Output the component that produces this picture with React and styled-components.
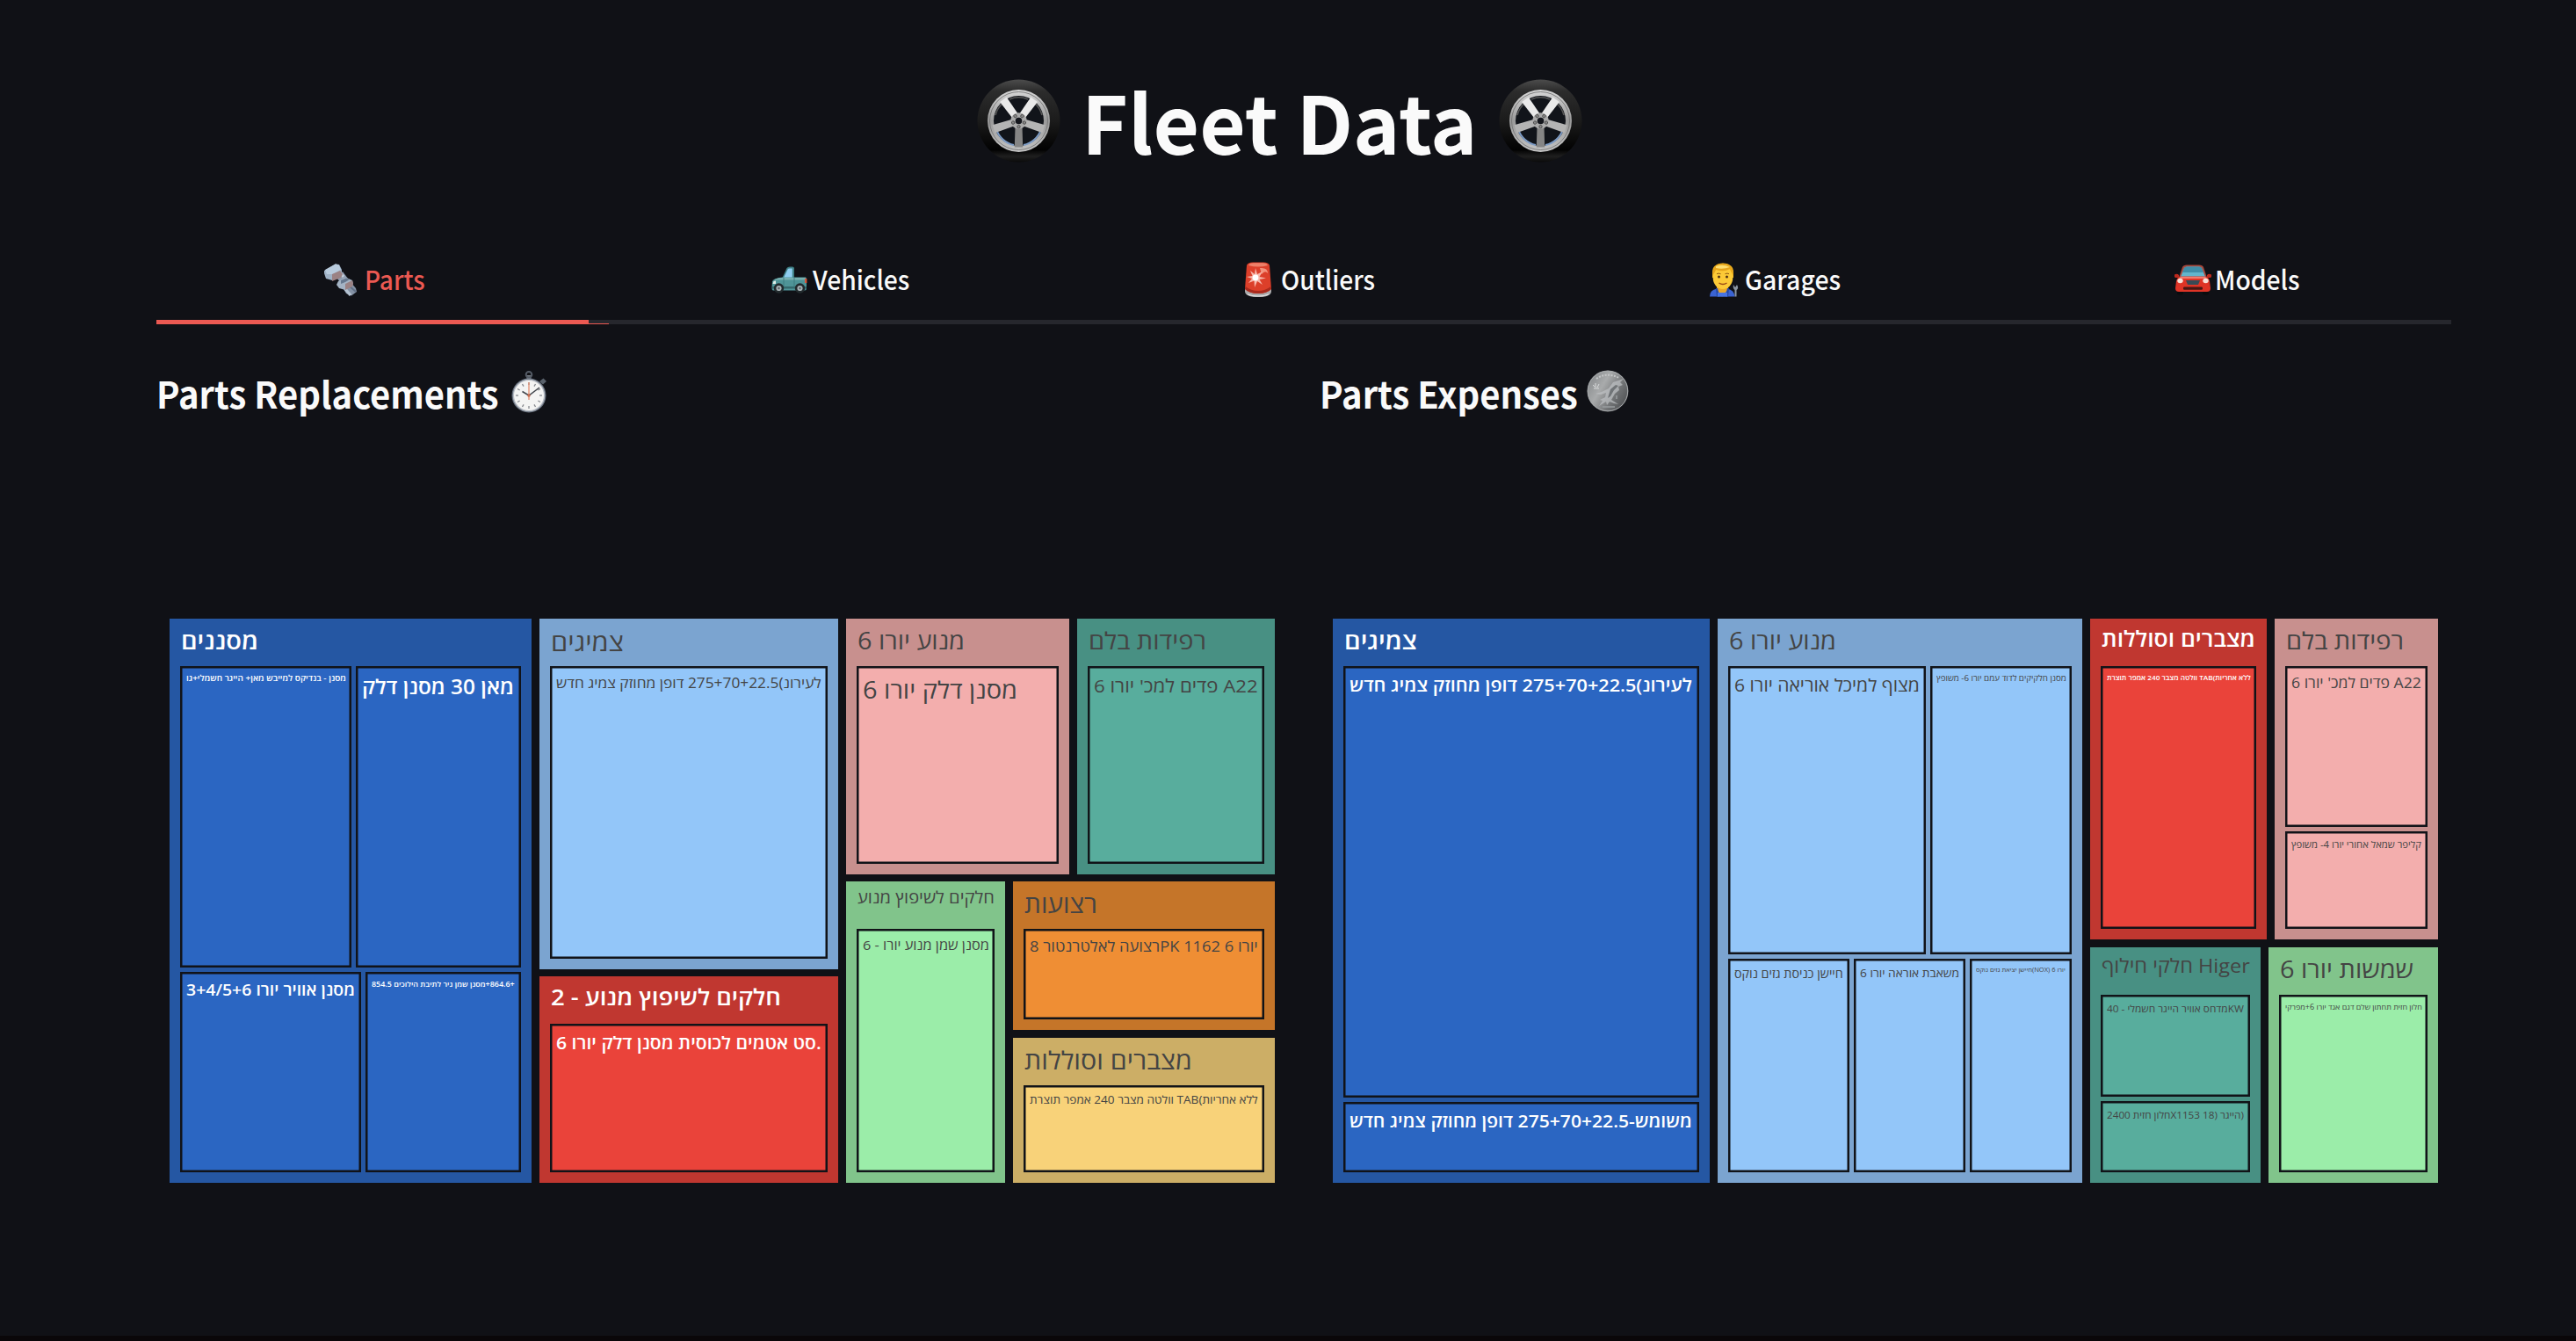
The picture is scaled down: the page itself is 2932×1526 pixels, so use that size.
import React, { useLayoutEffect, useRef, useState } from 'react';
import styled, { createGlobalStyle } from 'styled-components';

const GlobalStyle = createGlobalStyle`
  * { box-sizing: border-box; }
  html, body { margin: 0; padding: 0; background: #101116; }
`;

const SANS = `'Noto Sans CJK JP', 'Noto Sans', sans-serif`;
const CHART = `'Open Sans', 'Noto Sans', 'DejaVu Sans', sans-serif`;

const Page = styled.main`
  width: 2932px;
  height: 1526px;
  overflow: hidden;
  background: #101116;
  color: #fafafa;
  font-family: ${SANS};
  padding: 84px 142px 0 178px;
  border-bottom: 6px solid #0a0709;
`;

const TitleBar = styled.header`
  display: flex;
  align-items: center;
  height: 106px;
  padding-left: 933px;
`;

const Title = styled.h1`
  margin: -2px 28px 0 23px;
  width: 446px;
  font-size: 91px;
  line-height: 106px;
  font-weight: 700;
`;

const Tabs = styled.nav`
  display: flex;
  gap: 38px;
  height: 179px;
  padding-top: 93px;
  border-bottom: 5px solid #26272d;
`;

const Tab = styled.div`
  flex: 1;
  display: flex;
  justify-content: center;
  align-items: center;
  height: 70px;
  padding-left: ${(p) => p.$shift ?? 0}px;
  color: ${(p) => (p.$active ? '#eb5952' : '#fafafa')};
  font-size: 30px;
  line-height: 40px;
  font-weight: 500;
`;

const TextBox = styled.div`
  width: ${(p) => p.$w}px;
  margin-left: ${(p) => p.$gap ?? 0}px;
  margin-top: ${(p) => p.$mt ?? 0}px;
`;

const Marker = styled.div`
  width: 492px;
  height: 5px;
  margin-top: -5px;
  background: #eb5952;
`;

const MarkerTail = styled.div`
  width: 515px;
  height: 1px;
  margin-top: -1px;
  background: #eb5952;
`;

const Columns = styled.section`
  display: grid;
  grid-template-columns: 1324px 1288px;
`;

const Heading = styled.h3`
  display: flex;
  align-items: center;
  margin: 0;
  padding: 49px 0 0;
  height: 107px;
  font-size: 42px;
  line-height: 56px;
  font-weight: 700;
`;

const Treemap = styled.div`
  display: flex;
  gap: 9px;
  width: 1258px;
  height: 642px;
  margin: 228px 0 0 15px;
  font-family: ${CHART};
`;

const Stack = styled.div`
  display: flex;
  flex-direction: column;
  gap: ${(p) => p.$gap ?? 8.5}px;
  flex: ${(p) => p.$size} 0 0;
  min-width: 0;
  min-height: 0;
`;

const Line = styled.div`
  display: flex;
  gap: ${(p) => p.$gap ?? 9}px;
  flex: ${(p) => p.$size} 0 0;
  min-width: 0;
  min-height: 0;
`;

const GroupBox = styled.div`
  display: flex;
  flex: ${(p) => p.$size} 0 0;
  min-width: 0;
  min-height: 0;
  background: ${(p) => p.$color};
  color: ${(p) => (p.$light ? '#fff' : '#444')};
  font-weight: ${(p) => (p.$light ? 600 : 500)};
`;

const GroupBody = styled.div`
  display: flex;
  flex-direction: column;
  flex: 1;
  min-width: 0;
  padding: 0 12px 12px;
`;

const GroupLabel = styled.div`
  height: 54px;
  padding: 6px 0 0 1px;
`;

const TileBox = styled.div`
  flex: ${(p) => p.$size} 0 0;
  min-width: 0;
  min-height: 0;
  overflow: hidden;
  box-shadow: inset 0 0 0 2.5px #111318;
  background: ${(p) => p.$color};
`;

const TileLabel = styled.div`
  padding: 8px 0 0 7px;
`;

const FitSpan = styled.span`
  display: block;
  width: max-content;
  white-space: pre;
  line-height: ${(p) => p.$lh ?? 'inherit'};
  transform-origin: 0 50%;
`;

/* Text stretched horizontally to an exact width, at a fixed size. */
function Stretch({ width, children }) {
  const ref = useRef(null);
  const [scale, setScale] = useState(1);
  useLayoutEffect(() => {
    setScale(width / ref.current.offsetWidth);
  }, [width]);
  return (
    <FitSpan ref={ref} style={{ transform: `scaleX(${scale})` }}>
      {children}
    </FitSpan>
  );
}

const WIDEN = 1.07;

/* Chart label, slightly widened, whose font size adapts to fill a width. */
function FitText({ width, dir, children }) {
  const ref = useRef(null);
  const [size, setSize] = useState(100);
  useLayoutEffect(() => {
    setSize((100 * width) / ref.current.offsetWidth / WIDEN);
  }, [width]);
  return (
    <FitSpan ref={ref} $lh="1.38" dir={dir} style={{ fontSize: size, transform: `scaleX(${WIDEN})` }}>
      {children}
    </FitSpan>
  );
}

const PALETTE = {
  blue: ['#2557a3', '#2b66c2', true],
  sky: ['#7ba4d0', '#93c6f9', false],
  red: ['#c03730', '#ea433a', true],
  pink: ['#c8908e', '#f3aead', false],
  teal: ['#489083', '#58ad9d', false],
  green: ['#81c48b', '#9beda9', false],
  orange: ['#c57529', '#ef8e34', false],
  yellow: ['#ccae66', '#f8d279', false],
};

function Group({ size, hue, label, width, children }) {
  const [outer, , light] = PALETTE[hue];
  return (
    <GroupBox $size={size} $color={outer} $light={light}>
      <GroupBody>
        <GroupLabel>
          <FitText width={width}>{label}</FitText>
        </GroupLabel>
        {children}
      </GroupBody>
    </GroupBox>
  );
}

function Tile({ size = 1, hue, width, dir, children }) {
  return (
    <TileBox $size={size} $color={PALETTE[hue][1]}>
      <TileLabel>
        <FitText width={width + 1} dir={dir}>{children}</FitText>
      </TileLabel>
    </TileBox>
  );
}

const Icon = styled.svg`
  display: block;
  flex: none;
  overflow: visible;
  margin-left: ${(p) => p.$ml ?? 0}px;
  margin-top: ${(p) => p.$mt ?? 0}px;
`;

const SPOKES = [
  { angle: 0, fill: '#858585' },
  { angle: 72, fill: '#b4b4b4' },
  { angle: 144, fill: '#e9e9e9' },
  { angle: 216, fill: '#e9e9e9' },
  { angle: 288, fill: '#b4b4b4' },
];

function Tire({ id }) {
  return (
    <Icon width="97" height="97" viewBox="0 0 97 97">
      <defs>
        <linearGradient id={`${id}r`} x1="0" y1="0" x2="0" y2="1">
          <stop offset="0" stopColor="#4c4c4c" />
          <stop offset=".14" stopColor="#2c2c2c" />
          <stop offset=".5" stopColor="#1b1b1b" />
          <stop offset=".85" stopColor="#020202" />
          <stop offset=".93" stopColor="#1f1f1f" />
          <stop offset="1" stopColor="#0a0a0a" />
        </linearGradient>
        <linearGradient id={`${id}m`} x1="0" y1="0" x2="0" y2="1">
          <stop offset="0" stopColor="#d8d8d8" />
          <stop offset=".5" stopColor="#999" />
          <stop offset="1" stopColor="#c4c4c4" />
        </linearGradient>
      </defs>
      <circle cx="48.5" cy="48.5" r="47" fill={`url(#${id}r)`} />
      <circle cx="48.5" cy="48.5" r="35.5" fill={`url(#${id}m)`} />
      <circle cx="48.5" cy="48.5" r="33" fill="none" stroke="#6c6c6c" strokeWidth=".8" />
      <circle cx="48.5" cy="48.5" r="28.5" fill="#11141a" />
      <path d="M23 58a27 27 0 0 0 20 18M54 76a27 27 0 0 0 20-18" fill="none" stroke="#7d9cc6" strokeWidth="2" />
      <path d="M22 42a27 27 0 0 1 9-14M75 42a27 27 0 0 0-9-14M38 24a27 27 0 0 1 21 0" fill="none" stroke="#555" strokeWidth="1.6" />
      {SPOKES.map((s) => (
        <path key={s.angle} d="M44.8 46L43.8 78.500H53.200L52.200 46Z" transform={`rotate(${s.angle} 48.5 48.5)`} fill={s.fill} />
      ))}
      <circle cx="48.5" cy="48.5" r="9.3" fill="#aaa" />
      {SPOKES.map((s) => (
        <circle key={s.angle} cx="48.5" cy="41.8" r="1.7" fill="#8b8b8b" stroke="#444" strokeWidth=".8" transform={`rotate(${s.angle + 180} 48.5 48.5)`} />
      ))}
      <circle cx="48.5" cy="48.5" r="3.8" fill="#14161c" />
    </Icon>
  );
}

const Bolt = () => (
  <Icon width="39" height="39" viewBox="0 0 39 39">
    <path d="M14 17L20 24L27 18L21 10Z" fill="#8e9cb0" />
    <path d="M17 10L22 16" stroke="#c2cfdd" strokeWidth="3" />
    <path d="M25 35L31 37.5L37 33L36 29L30 22L21 28Z" fill="#8492a5" />
    <path d="M24 30L30 37" stroke="#b5c3d2" strokeWidth="3.4" />
    <path d="M27 25L36 33" stroke="#627086" strokeWidth="2" />
    <path d="M0 9L13 1.5L17 2L20 8L20 13L9 20L2 18L0 12Z" fill="#9fb2c6" />
    <path d="M1 8L13 1.2L17 3L19 8L10 13L3 13Z" fill="#b8cbdd" />
    <path d="M9 13L18 9L21 13L19 17L9 21Z" fill="#9b8284" />
    <path d="M16 21L24 16.5L32 20L33 24L24 31L17 29L14 25Z" fill="#a4b3c4" />
    <path d="M24 24L32 20L33 24L32 27L24 31Z" fill="#9b8284" />
    <path d="M19 20L25 17.5L29 19L24 22L19 24Z" fill="#66788f" />
  </Icon>
);

const Truck = () => (
  <Icon width="41" height="31" viewBox="0 0 41 31">
    <path d="M12 14L17.5 2Q18.5 .5 21 .5H24Q25.6.5 26 2V14Z" fill="#3e7f84" />
    <path d="M14 13L18.6 3.4Q19 2.5 20.5 2.5H23.8V13Z" fill="#8fcdf0" />
    <path d="M1 17Q4 13 13 12.5H39Q40 12.5 40 15V25Q40 27.5 38 27.5H2Q.5 27.5.5 24Z" fill="#4f9497" />
    <path d="M3 15Q8 12.8 14 13H39V15.5H4Z" fill="#78b0b0" />
    <path d="M1 23H40V25.5H1Z" fill="#34686c" />
    <rect x="38" y="14" width="2.4" height="5" fill="#d5563c" />
    <path d="M2.5 17L5 16.5V20H1.5Z" fill="#e1efe9" />
    <path d="M14 13V24M26 13V24" stroke="#387478" strokeWidth=".8" />
    {[8.5, 32.5].map((x) => (
      <g key={x}>
        <circle cx={x} cy="25" r="5.7" fill="#222a2d" />
        <circle cx={x} cy="25" r="3.1" fill="#a9b3b6" />
        <circle cx={x} cy="25" r="1.2" fill="#586165" />
      </g>
    ))}
  </Icon>
);

const Siren = () => (
  <Icon width="32" height="40" viewBox="0 0 32 40">
    <path d="M1 30H31V34Q30 40 16 40Q2 40 1 34Z" fill="#a9a9ab" />
    <path d="M3 36Q16 41 29 36L27 38Q16 41 5 38Z" fill="#e3e3e3" />
    <path d="M3 4Q4 .5 10 .5H22Q28 .5 29 4L31 31Q26 36 16 36Q6 36 1 31Z" fill="#dc3f2a" />
    <path d="M1.5 28Q8 33 16 33Q24 33 30.5 28L31 31Q26 36 16 36Q6 36 1 31Z" fill="#a92a1d" />
    <path d="M5 4Q16 7 27 4Q26 1.2 21 1.2H11Q6 1.2 5 4Z" fill="#ee8069" />
    <path d="M18 7Q27 6 27 13Q24 9 20 14Z" fill="#f3937e" />
    <path d="M13 7L15 14L21 11L17.5 17L25 18.5L17.5 20L21 26L15 22L12 29L11.5 21.5L5 24L9 19L3 17L9.5 16L7 10L12 14Z" fill="#f8b8ac" />
    <circle cx="13" cy="18" r="3.4" fill="#fff" />
  </Icon>
);

const Mechanic = () => (
  <Icon width="33" height="39" viewBox="0 0 33 39">
    <path d="M0 38.5Q0 31 8 29.5H20Q28 31 28.5 38.5Z" fill="#3a63d2" />
    <path d="M8 30L14 38.5L21 30V26H8Z" fill="#e9a82c" />
    <path d="M7 29L8 38.5H11L9 29ZM20 29L18 38.5H21L22 29Z" fill="#2548a5" />
    <path d="M9 34H20V38.5H9Z" fill="#4774e4" />
    <path d="M3 11Q3 1 15 .5Q27 1 27 11V17H3Z" fill="#f2b51e" />
    <ellipse cx="15" cy="17" rx="11.3" ry="13" fill="#fcca37" />
    <path d="M3.5 14Q2.5 2 15 .8Q27.500 2 26.500 14Q24 10 23 7Q16 11 7 8Q6 11 3.500 14Z" fill="#e7a51b" />
    <path d="M7 4Q15 1 23 5Q15 8 7 6Z" fill="#ffdf70" />
    <circle cx="10.500" cy="16" r="1.500" fill="#4c2f12" />
    <circle cx="19.500" cy="16" r="1.500" fill="#4c2f12" />
    <path d="M8 12.700Q10 11.500 12.500 12.700M17.500 12.700Q20 11.500 22 12.700" stroke="#8f5a11" strokeWidth="1" fill="none" />
    <path d="M10.500 23Q15 26 19.500 23" stroke="#9c4b17" strokeWidth="1.500" fill="none" />
    <path d="M28.500 38.500V31Q26 29 27 25L29 28L31 25Q33.500 29 30.500 31V38.500Z" fill="#8c97a3" />
  </Icon>
);

const Car = () => (
  <Icon width="42" height="35" viewBox="0 0 42 35">
    <rect x="3" y="28" width="7" height="6.500" rx="2" fill="#0a0c0e" />
    <rect x="32" y="28" width="7" height="6.500" rx="2" fill="#0a0c0e" />
    <path d="M0 11.500Q3 10 5 12V15H1Q-.5 14 0 11.500ZM42 11.500Q39 10 37 12V15H41Q42.500 14 42 11.500Z" fill="#bd291d" />
    <path d="M5 15L9 3Q10 .5 14 .5H28Q32 .5 33 3L37 15Z" fill="#a6483c" />
    <path d="M7 14L11 4Q12 2.500 14 2.500H28Q30 2.500 31 4L35 14Z" fill="#63b5cc" />
    <path d="M9 9L11 4Q12 2.500 14 2.500H28Q30 2.500 31 4L33 9Z" fill="#3f8ea8" />
    <path d="M2 19Q3 14 8 13.500H34Q39 14 40 19L41 27Q41 31 37 31H5Q1 31 1 27Z" fill="#df3426" />
    <path d="M7 14H35L37 16H5Z" fill="#f37b6c" />
    <path d="M13 18H29L27 23H15Z" fill="#3a4a55" />
    <ellipse cx="6.500" cy="18.500" rx="3.200" ry="2.700" fill="#f7e2d9" />
    <ellipse cx="35.500" cy="18.500" rx="3.200" ry="2.700" fill="#f7e2d9" />
    <rect x="10" y="25.500" width="22" height="3.200" rx="1.200" fill="#481613" />
  </Icon>
);

const Stopwatch = () => (
  <Icon width="42" height="48" viewBox="0 0 42 48" $ml={13} $mt={-3}>
    <rect x="17.500" y="5" width="5" height="5" fill="#777d85" />
    <circle cx="20" cy="4.200" r="3.300" fill="none" stroke="#555c66" strokeWidth="2" />
    <path d="M32 12L36.500 8.500L40 12L36 15.500Z" fill="#59616b" />
    <circle cx="20" cy="28" r="19.500" fill="#69727f" />
    <circle cx="20" cy="28" r="18.300" fill="#b7bcc4" />
    <circle cx="20" cy="28" r="17" fill="#f4f4f3" />
    {Array.from({ length: 12 }, (_, i) => (
      <path key={i} d="M20 13V16" stroke="#85888d" strokeWidth="1.300" transform={`rotate(${i * 30} 20 28)`} />
    ))}
    <path d="M20 33V13" stroke="#e49072" strokeWidth="1.300" />
    <path d="M12.500 23.500L20 28L32 19" fill="none" stroke="#43474e" strokeWidth="1.500" />
    <circle cx="20" cy="28" r="1.700" fill="#c76a4c" />
  </Icon>
);

const Coin = () => (
  <Icon width="48" height="48" viewBox="0 0 48 48" $ml={9} $mt={-4}>
    <defs>
      <linearGradient id="coin" x1="0" y1=".2" x2="1" y2=".8">
        <stop offset="0" stopColor="#85888a" />
        <stop offset=".35" stopColor="#a9abac" />
        <stop offset=".7" stopColor="#6f7173" />
        <stop offset="1" stopColor="#4c4e50" />
      </linearGradient>
    </defs>
    <circle cx="24" cy="24" r="23.500" fill="url(#coin)" />
    <circle cx="24" cy="24" r="22.700" fill="none" stroke="#a5a8aa" strokeWidth="1" />
    <path d="M11 10Q22 2 37 9" fill="none" stroke="#c4c6c7" strokeWidth="2" strokeDasharray="2 1.500" />
    <path d="M25 21L30 14L42 10L38 14L41 17L36 19L37 23L32 27L28 34L36 39L31 38L26 36L23 40L22 36L14 41L18 35L15 34L21 31L22 26L16 28L10 27L17 25Z" fill="#bfc2c5" opacity=".7" />
    <path d="M27 22L33 17L36 18L31 23L27 30L24 32Z" fill="#707477" />
    <path d="M10 20V15M12 20L14 16M9 19L7 17M8 21H14" stroke="#d9dbdc" strokeWidth="1" />
    <path d="M34 29V33M18 42H32" stroke="#999da0" strokeWidth="1.500" />
  </Icon>
);

const TABS = [
  { name: 'Parts', icon: <Bolt />, w: 69, gap: 7, shift: 5 },
  { name: 'Vehicles', icon: <Truck />, w: 110, gap: 6, shift: 4 },
  { name: 'Outliers', icon: <Siren />, w: 107, gap: 10, shift: 9 },
  { name: 'Garages', icon: <Mechanic />, w: 109, gap: 7, shift: 5 },
  { name: 'Models', icon: <Car />, w: 97, gap: 4, shift: -2 },
];

const Replacements = () => (
  <Treemap>
    <Stack $size={412}>
      <Group size={1} hue="blue" label="מסננים" width={88}>
        <Stack $size={1} $gap={5}>
          <Line $size={344} $gap={5}>
            <Tile size={195} hue="blue" width={181}>מסנן - בנדיקס למייבש מאן+ הייגר חשמלי+גו</Tile>
            <Tile size={188} hue="blue" width={172}>מאן 30 מסנן דלק</Tile>
          </Line>
          <Line $size={228} $gap={5}>
            <Tile size={206} hue="blue" width={191}>מסנן אוויר יורו 3+4/5+6</Tile>
            <Tile size={177} hue="blue" width={162} dir="rtl">+864.6+מסנן שמן גיר לתיבת הילוכים 854.5</Tile>
          </Line>
        </Stack>
      </Group>
    </Stack>
    <Stack $size={340}>
      <Group size={398.800} hue="sky" label="צמיגים" width={83}>
        <Tile hue="sky" width={301}>לעירונ)275+70+22.5 דופן מחוזק צמיג חדש</Tile>
      </Group>
      <Group size={234.700} hue="red" label="חלקים לשיפוץ מנוע - 2" width={262}>
        <Tile hue="red" width={301}>סט אטמים לכוסית מסנן דלק יורו 6.</Tile>
      </Group>
    </Stack>
    <Stack $size={488}>
      <Line $size={290.700}>
        <Group size={254} hue="pink" label="מנוע יורו 6" width={122}>
          <Tile hue="pink" width={175}>מסנן דלק יורו 6</Tile>
        </Group>
        <Group size={225} hue="teal" label="רפידות בלם" width={134}>
          <Tile hue="teal" width={186}>פדים למכ' יורו 6 A22</Tile>
        </Group>
      </Line>
      <Line $size={342.800}>
        <Group size={181} hue="green" label="חלקים לשיפוץ מנוע" width={156}>
          <Tile hue="green" width={143}>מסנן שמן מנוע יורו - 6</Tile>
        </Group>
        <Stack $size={298}>
          <Group size={169} hue="orange" label="רצועות" width={83}>
            <Tile hue="orange" width={259}>רצועה לאלטרנטור 8PK 1162 יורו 6</Tile>
          </Group>
          <Group size={165.300} hue="yellow" label="מצברים וסוללות" width={191}>
            <Tile hue="yellow" width={259}>וולטה מצבר 240 אמפר תוצרת TAB(ללא אחריות</Tile>
          </Group>
        </Stack>
      </Line>
    </Stack>
  </Treemap>
);

const Expenses = () => (
  <Treemap>
    <Stack $size={429}>
      <Group size={1} hue="blue" label="צמיגים" width={83}>
        <Stack $size={1} $gap={5}>
          <Tile size={491.500} hue="blue" width={389}>לעירונ)275+70+22.5 דופן מחוזק צמיג חדש</Tile>
          <Tile size={80} hue="blue" width={389}>משומש-275+70+22.5 דופן מחוזק צמיג חדש</Tile>
        </Stack>
      </Group>
    </Stack>
    <Stack $size={415}>
      <Group size={1} hue="sky" label="מנוע יורו 6" width={122}>
        <Stack $size={1} $gap={5}>
          <Line $size={329} $gap={5}>
            <Tile size={225} hue="sky" width={210}>מצוף למיכל אוריאה יורו 6</Tile>
            <Tile size={161} hue="sky" width={147}>מסנן חלקיקים לדוד עמם יורו 6- משופץ</Tile>
          </Line>
          <Line $size={243} $gap={5}>
            <Tile size={138} hue="sky" width={123}>חיישן כניסת גזים נוקס</Tile>
            <Tile size={127} hue="sky" width={112}>משאבת אוראה יורו 6</Tile>
            <Tile size={116} hue="sky" width={101}>חיישן יציאת גזים נוקס(NOX) יורו 6</Tile>
          </Line>
        </Stack>
      </Group>
    </Stack>
    <Stack $size={396}>
      <Line $size={365}>
        <Group size={201} hue="red" label="מצברים וסוללות" width={175}>
          <Tile hue="red" width={163}>וולטה מצבר 240 אמפר תוצרת TAB(ללא אחריות</Tile>
        </Group>
        <Group size={186} hue="pink" label="רפידות בלם" width={134}>
          <Stack $size={1} $gap={5}>
            <Tile size={183} hue="pink" width={147}>פדים למכ' יורו 6 A22</Tile>
            <Tile size={111.500} hue="pink" width={147}>קליפר שמאל אחורי יורו 4- משופץ</Tile>
          </Stack>
        </Group>
      </Line>
      <Line $size={268.500}>
        <Group size={194} hue="teal" label="חלקי חילוף Higer" width={169}>
          <Stack $size={1} $gap={5}>
            <Tile size={117} hue="teal" width={155}>מדחס אוויר הייגר חשמלי - 40KW</Tile>
            <Tile size={81} hue="teal" width={155}>חלון חזית 2400X1153 18) הייגר)</Tile>
          </Stack>
        </Group>
        <Group size={193} hue="green" label="שמשות יורו 6" width={152}>
          <Tile hue="green" width={155}>חלון חזית תחתון שלם דגם אגד יורו 6+מפרקי</Tile>
        </Group>
      </Line>
    </Stack>
  </Treemap>
);

export default function App() {
  return (
    <Page>
      <GlobalStyle />
      <TitleBar>
        <Tire id="a" />
        <Title><Stretch width={451}>Fleet Data</Stretch></Title>
        <Tire id="b" />
      </TitleBar>
      <Tabs>
        {TABS.map((t, i) => (
          <Tab key={t.name} $active={i === 0} $shift={t.shift}>
            {t.icon}
            <TextBox $w={t.w} $gap={t.gap} $mt={-3}><Stretch width={t.w}>{t.name}</Stretch></TextBox>
          </Tab>
        ))}
      </Tabs>
      <Marker />
      <MarkerTail />
      <Columns>
        <div>
          <Heading>
            <TextBox $w={391} $mt={-1}><Stretch width={390}>Parts Replacements</Stretch></TextBox>
            <Stopwatch />
          </Heading>
          <Replacements />
        </div>
        <div>
          <Heading>
            <TextBox $w={295} $mt={-1}><Stretch width={294}>Parts Expenses</Stretch></TextBox>
            <Coin />
          </Heading>
          <Expenses />
        </div>
      </Columns>
    </Page>
  );
}
